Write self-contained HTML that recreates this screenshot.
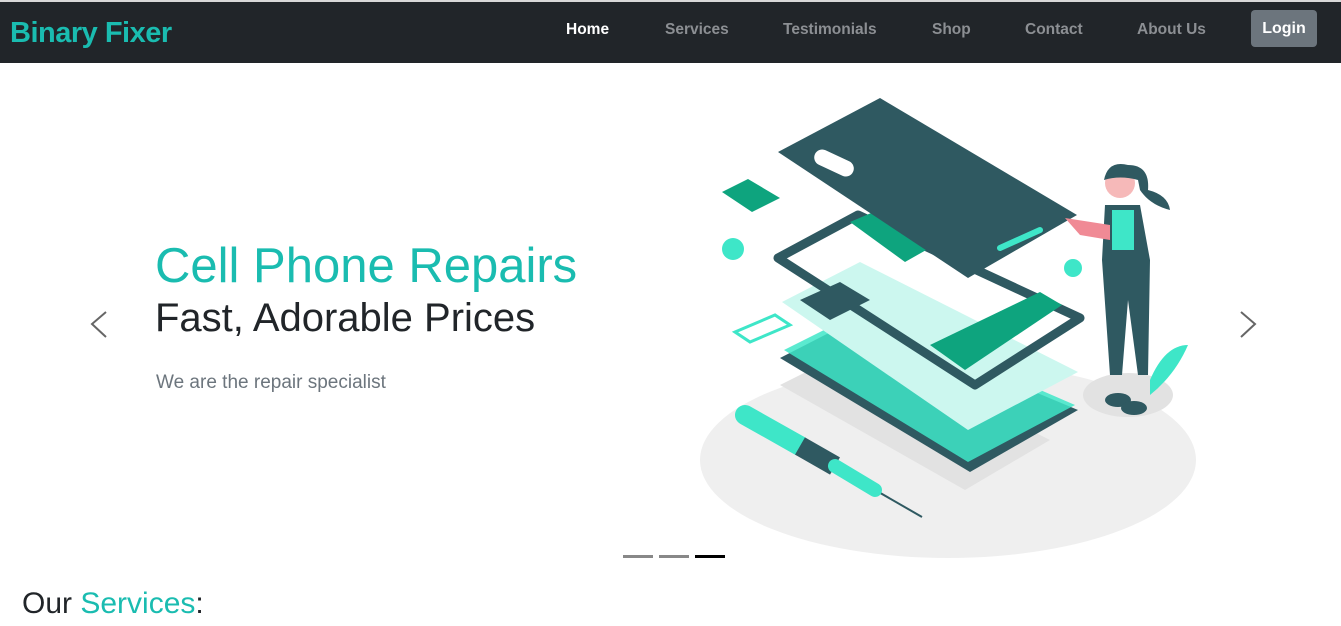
<!DOCTYPE html>
<html><head><meta charset="utf-8"><style>
*{margin:0;padding:0;box-sizing:border-box}
body{width:1341px;height:626px;overflow:hidden;background:#fff;font-family:"Liberation Sans",Roboto,sans-serif;position:relative}
.nav{position:absolute;top:2px;left:0;width:1341px;height:61px;background:#212529;border-top:0}
.top{position:absolute;top:0;left:0;width:1341px;height:2px;background:#d8d8d8}
.brand{position:absolute;left:10px;top:15px;color:#1abcb0;font-weight:bold;font-size:29px;letter-spacing:-0.5px}
.nav a{position:absolute;top:19px;font-size:15.5px;font-weight:bold;color:#8c8f93;text-decoration:none}
.login{position:absolute;left:1251px;top:8px;width:66px;height:37px;background:#6c757d;border-radius:4px;color:#fff;font-weight:bold;font-size:16px;text-align:center;line-height:37px}
.h1{position:absolute;left:155px;top:238px;font-size:49px;color:#1abcb0}
.h2{position:absolute;left:155px;top:296px;font-size:40px;color:#212529}
.p{position:absolute;left:156px;top:372px;font-size:19px;color:#6c757d}
.os{position:absolute;left:22px;top:587px;font-size:30px;color:#212529}
.os span{color:#1abcb0}
.ind{position:absolute;top:555px;width:30px;height:3px;background:#888}
</style></head><body>
<div class="top"></div>
<div class="nav">
<div class="brand">Binary Fixer</div>
<a style="left:566px;color:#fff">Home</a>
<a style="left:665px">Services</a>
<a style="left:783px">Testimonials</a>
<a style="left:932px">Shop</a>
<a style="left:1025px">Contact</a>
<a style="left:1137px">About Us</a>
<div class="login">Login</div>
</div>
<div class="h1">Cell Phone Repairs</div>
<div class="h2">Fast, Adorable Prices</div>
<div class="p">We are the repair specialist</div>
<svg style="position:absolute;left:0;top:0" width="1341" height="626">
<path d="M106 312 L92 324 L106 337" stroke="#666" stroke-width="2" fill="none"/>
<path d="M1241 312 L1255 324 L1241 337" stroke="#666" stroke-width="2" fill="none"/>
<ellipse cx="948" cy="460" rx="248" ry="98" fill="#efefef"/>
<polygon points="780,385 860,345 1050,440 965,490" fill="#e2e2e2"/>
<polygon points="780,358 858,318 1078,410 970,472" fill="#2f5961"/>
<polygon points="784,350 860,312 1075,405 968,462" fill="#3ee6c8" opacity=".85"/>
<polygon points="782,302 860,262 1078,372 968,430" fill="#ccf7ef"/>
<polygon points="778,258 858,215 1080,318 975,385" fill="none" stroke="#2f5961" stroke-width="9" stroke-linejoin="round"/>
<polygon points="930,345 1040,292 1062,305 965,370" fill="#0ea47e"/>
<polygon points="850,222 890,205 935,245 905,262" fill="#0ea47e"/>
<polygon points="800,300 840,282 870,300 830,320" fill="#2f5961"/>
<polygon points="778,152 880,98 1077,215 968,278" fill="#2f5961"/>
<rect x="813" y="155" width="42" height="16" rx="8" fill="#fff" transform="rotate(25 834 163)"/>
<line x1="1000" y1="248" x2="1040" y2="230" stroke="#3ee6c8" stroke-width="6" stroke-linecap="round"/>
<polygon points="722,192 748,179 780,198 752,212" fill="#0ea47e"/>
<circle cx="733" cy="249" r="11" fill="#3ee6c8"/><circle cx="1073" cy="268" r="9" fill="#3ee6c8"/>
<polygon points="735,332 775,315 790,325 750,342" fill="none" stroke="#3ee6c8" stroke-width="3"/>
<line x1="745" y1="415" x2="922" y2="517" stroke="#2f5961" stroke-width="2"/>
<line x1="745" y1="415" x2="800" y2="446" stroke="#3ee6c8" stroke-width="20" stroke-linecap="round"/>
<line x1="800" y1="446" x2="835" y2="466" stroke="#2f5961" stroke-width="20"/>
<line x1="835" y1="466" x2="875" y2="490" stroke="#3ee6c8" stroke-width="14" stroke-linecap="round"/>
<ellipse cx="1128" cy="395" rx="45" ry="22" fill="#e2e2e2"/>
<path d="M1150 380 Q1165 345 1188 345 Q1175 375 1150 395Z" fill="#3ee6c8"/>
<path d="M1105 205 L1140 205 L1150 260 L1148 375 L1138 375 L1128 300 L1122 375 L1110 375 L1102 260Z" fill="#2f5961"/>
<rect x="1112" y="210" width="22" height="40" fill="#3ee6c8"/>
<path d="M1065 218 L1110 225 L1110 240 L1080 235Z" fill="#f08a95"/>
<circle cx="1120" cy="183" r="15" fill="#f6b9b9"/>
<path d="M1104 180 Q1108 160 1128 165 Q1150 165 1148 190 Q1168 195 1170 210 Q1150 205 1140 190 L1138 180 Q1120 175 1104 180Z" fill="#2f5961"/>
<ellipse cx="1118" cy="400" rx="13" ry="7" fill="#2f5961"/><ellipse cx="1134" cy="408" rx="13" ry="7" fill="#2f5961"/>
</svg>
<div class="ind" style="left:623px"></div><div class="ind" style="left:659px"></div><div class="ind" style="left:695px;background:#000"></div>
<div class="os">Our <span>Services</span>:</div>
</body></html>
